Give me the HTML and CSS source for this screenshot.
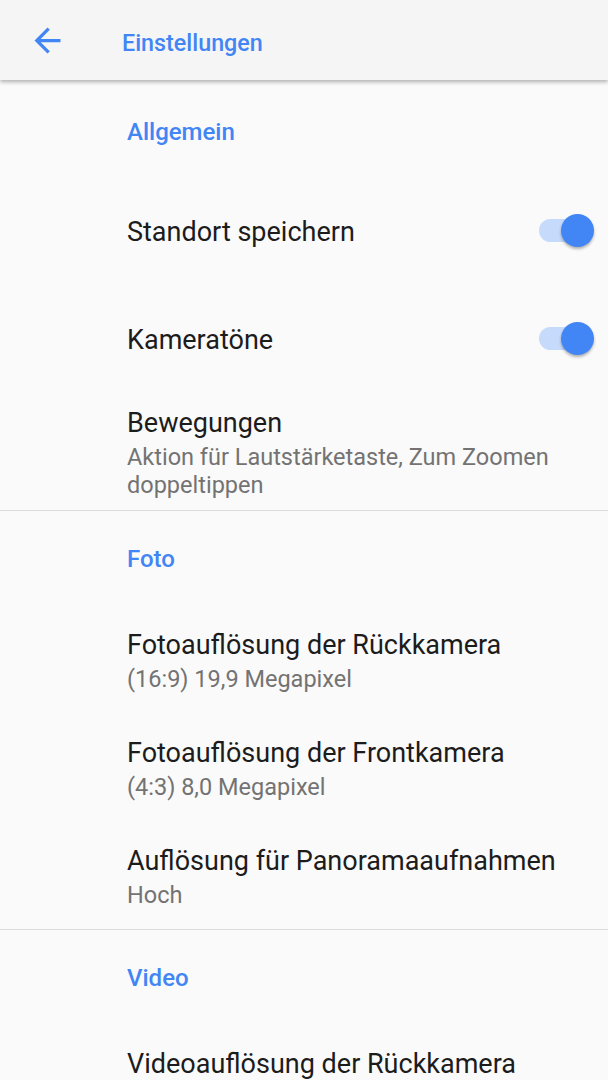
FILE: index.html
```html
<!DOCTYPE html>
<html lang="de">

<head>
    <meta charset="UTF-8">
    <meta name="viewport" content="width=device-width, initial-scale=1.0">
    <title>Einstellungen</title>

    <link rel="stylesheet" href="styles.css">
</head>

<body>
    <div class="toolbar">
        <svg class="backIcon" viewBox="0 0 24 24">
            <path d="M20 11H7.83l5.59-5.59L12 4l-8 8 8 8 1.41-1.41L7.83 13H20v-2z"></path>
        </svg>
        <h1 class="toolbarTitle">Einstellungen</h1>
    </div>

    <div class="settings">
        <div class="group first">
            <h2 class="groupTitle">Allgemein</h2>

            <div class="item single">
                <div class="itemText">
                    <div class="itemTitle">Standort speichern</div>
                </div>
                <div class="switch on">
                    <div class="track"></div>
                    <div class="thumb"></div>
                </div>
            </div>

            <div class="item single">
                <div class="itemText">
                    <div class="itemTitle">Kameratöne</div>
                </div>
                <div class="switch on">
                    <div class="track"></div>
                    <div class="thumb"></div>
                </div>
            </div>

            <div class="item tall">
                <div class="itemText">
                    <div class="itemTitle">Bewegungen</div>
                    <div class="itemSub">Aktion für Lautstärketaste, Zum Zoomen doppeltippen</div>
                </div>
            </div>
        </div>

        <div class="group">
            <h2 class="groupTitle">Foto</h2>

            <div class="item">
                <div class="itemText">
                    <div class="itemTitle">Fotoauflösung der Rückkamera</div>
                    <div class="itemSub">(16:9) 19,9 Megapixel</div>
                </div>
            </div>

            <div class="item">
                <div class="itemText">
                    <div class="itemTitle">Fotoauflösung der Frontkamera</div>
                    <div class="itemSub">(4:3) 8,0 Megapixel</div>
                </div>
            </div>

            <div class="item">
                <div class="itemText">
                    <div class="itemTitle">Auflösung für Panoramaaufnahmen</div>
                    <div class="itemSub">Hoch</div>
                </div>
            </div>
        </div>

        <div class="group">
            <h2 class="groupTitle">Video</h2>

            <div class="item">
                <div class="itemText">
                    <div class="itemTitle">Videoauflösung der Rückkamera</div>
                    <div class="itemSub">(16:9) 4K UHD</div>
                </div>
            </div>
        </div>
    </div>
</body>

</html>
```

FILE: styles.css
```css
*{
    margin: 0;
    padding: 0;
    box-sizing: border-box;
}

body{
    background-color: #fafafa;
    font-family: Roboto, "Noto Sans", sans-serif;
    overflow: hidden;
    height: 1080px;
}

.toolbar{
    height: 80px;
    display: flex;
    align-items: center;
    padding-left: 28px;
    background-color: #f5f5f5;
    box-shadow: 0 2px 4px rgba(0, 0, 0, 0.3);
    position: relative;
    z-index: 1;
}

.backIcon{
    width: 39px;
    height: 39px;
    fill: #4285f4;
}

.toolbarTitle{
    margin-left: 55px;
    margin-top: 5px;
    font-size: 23.3px;
    line-height: 28px;
    font-weight: 500;
    color: #4285f4;
}

.group{
    border-bottom: 1px solid #dcdcdc;
}

.group:last-child{
    border-bottom: none;
}

.groupTitle{
    padding: 32px 0 30px 127px;
    font-size: 24px;
    line-height: 32px;
    font-weight: 500;
    color: #4285f4;
}

.group.first .groupTitle{
    padding-top: 36px;
}

.item{
    height: 108px;
    display: flex;
    align-items: center;
    padding: 0 13px 0 127px;
}

.item.tall{
    height: auto;
    align-items: flex-start;
    padding-top: 9px;
    padding-bottom: 11px;
}

.itemText{
    flex: 1;
}

.itemTitle{
    font-size: 27px;
    line-height: 40px;
    color: #1c1c1c;
}

.itemSub{
    font-size: 23.5px;
    line-height: 28px;
    color: #737373;
}

.switch{
    position: relative;
    width: 56px;
    height: 34px;
    margin-top: -2px;
}

.switch .track{
    position: absolute;
    left: 0;
    top: 5px;
    width: 54px;
    height: 23px;
    border-radius: 12px;
    background-color: #c6dafc;
}

.switch .thumb{
    position: absolute;
    right: 1px;
    top: 0;
    width: 33px;
    height: 33px;
    border-radius: 50%;
    background-color: #4285f4;
    box-shadow: 0 2px 3px rgba(0, 0, 0, 0.3);
}
```
